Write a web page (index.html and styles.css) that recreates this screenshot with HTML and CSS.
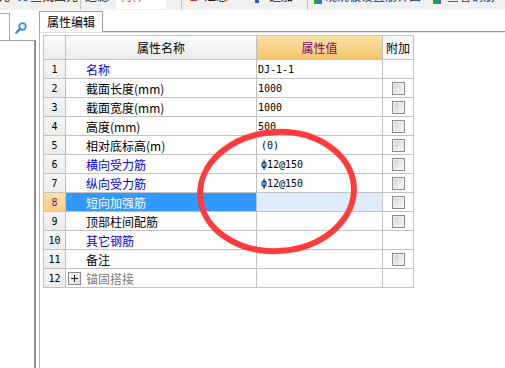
FILE: index.html
```html
<!DOCTYPE html>
<html lang="zh-CN">
<head>
<meta charset="utf-8">
<title>属性编辑</title>
<link rel="stylesheet" href="styles.css">
</head>
<body>
<div class="toolbar">
  <span class="tb-text tb-first">元</span>
  <span class="tb-icon-a">A</span>
  <span class="tb-text">查找图元</span>
  <span class="tb-sep"></span>
  <span class="tb-text">过滤</span>
  <span class="tb-combo"><span class="tb-combo-text">构件</span></span>
  <span class="tb-sep tb-sep2"></span>
  <span class="tb-sigma">Σ</span>
  <span class="tb-text tb-small">▾</span>
  <span class="tb-text">汇总</span>
  <span class="tb-blue"></span>
  <span class="tb-text tb-add">追加</span>
  <span class="tb-sep tb-sep3"></span>
  <span class="tb-green"></span>
  <span class="tb-text tb-navy">现浇板设置筋详图</span>
  <span class="tb-green tb-green2"></span>
  <span class="tb-text tb-navy">查看钢筋</span>
</div>
<div class="main">
  <aside class="side">
    <div class="search">
      <div class="search-input"></div>
      <svg class="search-icon" width="12" height="12" viewBox="0 0 12 12">
        <circle cx="7.5" cy="4.5" r="3.3" fill="#e9f3fd" stroke="#3b8ee0" stroke-width="1.8"/>
        <line x1="5.2" y1="6.8" x2="1.3" y2="10.7" stroke="#2f7fd2" stroke-width="2.2" stroke-linecap="round"/>
      </svg>
    </div>
    <div class="side-body"></div>
  </aside>
  <section class="editor">
    <div class="tabs">
      <div class="tab">属性编辑</div>
    </div>
    <div class="pane">
      <div class="grid">
        <div class="c hd"></div>
        <div class="c hd hd-name">属性名称</div>
        <div class="c hd hd-val">属性值</div>
        <div class="c hd hd-add">附加</div>

        <div class="c num">1</div>
        <div class="c name blue">名称</div>
        <div class="c val">DJ-1-1</div>
        <div class="c add"></div>

        <div class="c num">2</div>
        <div class="c name">截面长度(mm)</div>
        <div class="c val">1000</div>
        <div class="c add"><span class="chk"></span></div>

        <div class="c num">3</div>
        <div class="c name">截面宽度(mm)</div>
        <div class="c val">1000</div>
        <div class="c add"><span class="chk"></span></div>

        <div class="c num">4</div>
        <div class="c name">高度(mm)</div>
        <div class="c val">500</div>
        <div class="c add"><span class="chk"></span></div>

        <div class="c num">5</div>
        <div class="c name">相对底标高(m)</div>
        <div class="c val val-in">(0)</div>
        <div class="c add"><span class="chk"></span></div>

        <div class="c num">6</div>
        <div class="c name blue">横向受力筋</div>
        <div class="c val val-in">ф12@150</div>
        <div class="c add"><span class="chk"></span></div>

        <div class="c num">7</div>
        <div class="c name blue">纵向受力筋</div>
        <div class="c val val-in">ф12@150</div>
        <div class="c add"><span class="chk"></span></div>

        <div class="c num num-sel">8</div>
        <div class="c name name-sel">短向加强筋</div>
        <div class="c val val-sel"></div>
        <div class="c add"><span class="chk"></span></div>

        <div class="c num">9</div>
        <div class="c name">顶部柱间配筋</div>
        <div class="c val"></div>
        <div class="c add"><span class="chk"></span></div>

        <div class="c num">10</div>
        <div class="c name blue">其它钢筋</div>
        <div class="c val"></div>
        <div class="c add"></div>

        <div class="c num">11</div>
        <div class="c name">备注</div>
        <div class="c val"></div>
        <div class="c add"><span class="chk"></span></div>

        <div class="c num">12</div>
        <div class="c name name-grp"><span class="plus"></span>锚固搭接</div>
        <div class="c val"></div>
        <div class="c add"></div>
      </div>
    </div>
  </section>
</div>
<svg class="mark" width="505" height="368" viewBox="0 0 505 368">
  <ellipse cx="277" cy="191.5" rx="77" ry="59.5" transform="rotate(-4 277 191.5)" fill="none" stroke="#ff3b3b" stroke-width="6"/>
</svg>
</body>
</html>
```

FILE: styles.css
```css
* { box-sizing: border-box; }
html, body { margin: 0; padding: 0; }
body {
  width: 505px;
  height: 368px;
  overflow: hidden;
  background: #fff;
  font-family: "Noto Sans CJK SC", "Liberation Sans", sans-serif;
  font-size: 12px;
  color: #000;
  position: relative;
}

/* toolbar (cut off at the top of the shot) */
.toolbar {
  height: 10px;
  background: #f0f0f0;
  display: flex;
  align-items: flex-start;
  overflow: hidden;
  white-space: nowrap;
}
.tb-text {
  margin-top: -11px;
  line-height: 14px;
  font-size: 12px;
  color: #1a1a1a;
}
.tb-first { margin-left: -2px; width: 14px; }
.tb-icon-a {
  margin-top: -10px;
  line-height: 14px;
  font-family: "Liberation Serif", serif;
  font-weight: bold;
  font-size: 13px;
  color: #2a5fc4;
  width: 12px;
  margin-left: 6px;
}
.tb-sep {
  width: 1px;
  height: 10px;
  background: #c4c4c4;
  margin: 0 4px 0 2px;
}
.tb-combo {
  width: 50px;
  height: 9px;
  background: #fff;
  margin-left: 7px;
  overflow: hidden;
}
.tb-combo-text {
  display: block;
  margin-top: -11px;
  margin-left: 4px;
  line-height: 14px;
  color: #c0601a;
}
.tb-sep2 { margin-left: 15px; }
.tb-sigma {
  margin-top: -11px;
  line-height: 14px;
  color: #c0302a;
  font-weight: bold;
  margin-left: 4px;
  width: 8px;
}
.tb-small { font-size: 9px; width: 6px; }
.tb-blue {
  width: 4px;
  height: 3px;
  background: #2760c8;
  margin-left: 27px;
}
.tb-add { margin-left: 10px; }
.tb-sep3 { margin-left: 14px; }
.tb-green {
  width: 8px;
  height: 4px;
  background: linear-gradient(90deg, #1ea83a 50%, #3b6fc8 50%);
  margin-left: 2px;
  margin-right: 3px;
}
.tb-green2 { margin-left: 12px; margin-right: 6px; }
.tb-navy { color: #263a6a; }

/* main area */
.main {
  display: flex;
  height: 358px;
}
.side {
  width: 36px;
  display: flex;
  flex-direction: column;
}
.search {
  height: 31px;
  border-bottom: 1px solid #a6a6a6;
  display: flex;
  align-items: flex-start;
}
.search-input {
  width: 10px;
  height: 27px;
  margin-top: 3px;
  border-top: 1px solid #ababab;
  border-right: 1px solid #ababab;
  background: #fff;
}
.search-icon {
  margin-top: 12px;
  margin-left: 5px;
}
.side-body {
  flex: 1;
  border-right: 2px solid #8f8f8f;
}

.editor {
  flex: 1;
  padding-left: 3px;
  padding-top: 1px;
  display: flex;
  flex-direction: column;
}
.tabs {
  display: flex;
  height: 20px;
}
.tab {
  width: 64px;
  height: 21px;
  border: 1px solid #a0a0a0;
  border-bottom: none;
  background: #fff;
  line-height: 19px;
  padding-left: 7px;
  font-size: 12px;
  position: relative;
  z-index: 1;
}
.pane {
  flex: 1;
  border-top: 1px solid #9a9a9a;
  border-left: 1px solid #b4b4b4;
  box-shadow: inset 0 1px 0 #e2e2e2;
  padding: 3px 0 0 3px;
}

/* property grid */
.grid {
  display: grid;
  grid-template-columns: 21px 190px 125px 30px;
  grid-template-rows: 23px repeat(12, 18px);
  gap: 1px;
  background: #c2c2c2;
  border: 1px solid #c2c2c2;
  width: max-content;
}
.c {
  background: #fff;
  display: flex;
  align-items: center;
  white-space: nowrap;
  overflow: hidden;
}
.hd {
  background: linear-gradient(#fbfbfb, #ececec);
  justify-content: center;
  font-size: 12px;
}
.hd-val {
  background: linear-gradient(#fde2a8, #f2c46c);
  color: #7a0a7a;
}
.hd-add {
  background: #f8f8f8;
}
.num {
  background: linear-gradient(#f6f6f6, #ececec);
  justify-content: center;
  font-family: "DejaVu Sans Mono", "Liberation Mono", monospace;
  font-size: 10px;
  padding-top: 1px;
}
.num-sel {
  background: linear-gradient(#fde0a4, #f9cf86);
  color: #6a1a7a;
}
.name {
  padding-left: 20px;
  padding-top: 1px;
  font-size: 12px;
}
.blue { color: #0000ee; }
.name-sel {
  background: #3399ff;
  color: #fff;
}
.name-grp {
  padding-left: 2px;
  color: #7a7a7a;
}
.plus {
  width: 13px;
  height: 13px;
  margin-right: 5px;
  border: 1px solid #8a8a8a;
  background: linear-gradient(135deg, #fafafa, #dedede);
  position: relative;
}
.plus::before,
.plus::after {
  content: "";
  position: absolute;
  background: #222;
}
.plus::before { left: 2px; right: 2px; top: 5px; height: 1px; }
.plus::after { top: 2px; bottom: 2px; left: 5px; width: 1px; }
.val {
  padding-left: 1px;
  padding-top: 1px;
  font-family: "DejaVu Sans Mono", "Liberation Mono", monospace;
  font-size: 10px;
}
.val-in { padding-left: 4px; }
.val-sel { background: #deedfd; }
.add { justify-content: center; padding-left: 1px; }
.chk {
  width: 13px;
  height: 13px;
  border: 1px solid #8c8c8c;
  background: linear-gradient(135deg, #cfcfcf 0%, #e9e9e9 55%, #f8f8f8 100%);
  box-shadow: inset 0 0 0 1px #f2f2f2;
}

.mark {
  position: absolute;
  left: 0;
  top: 0;
  pointer-events: none;
}
```
